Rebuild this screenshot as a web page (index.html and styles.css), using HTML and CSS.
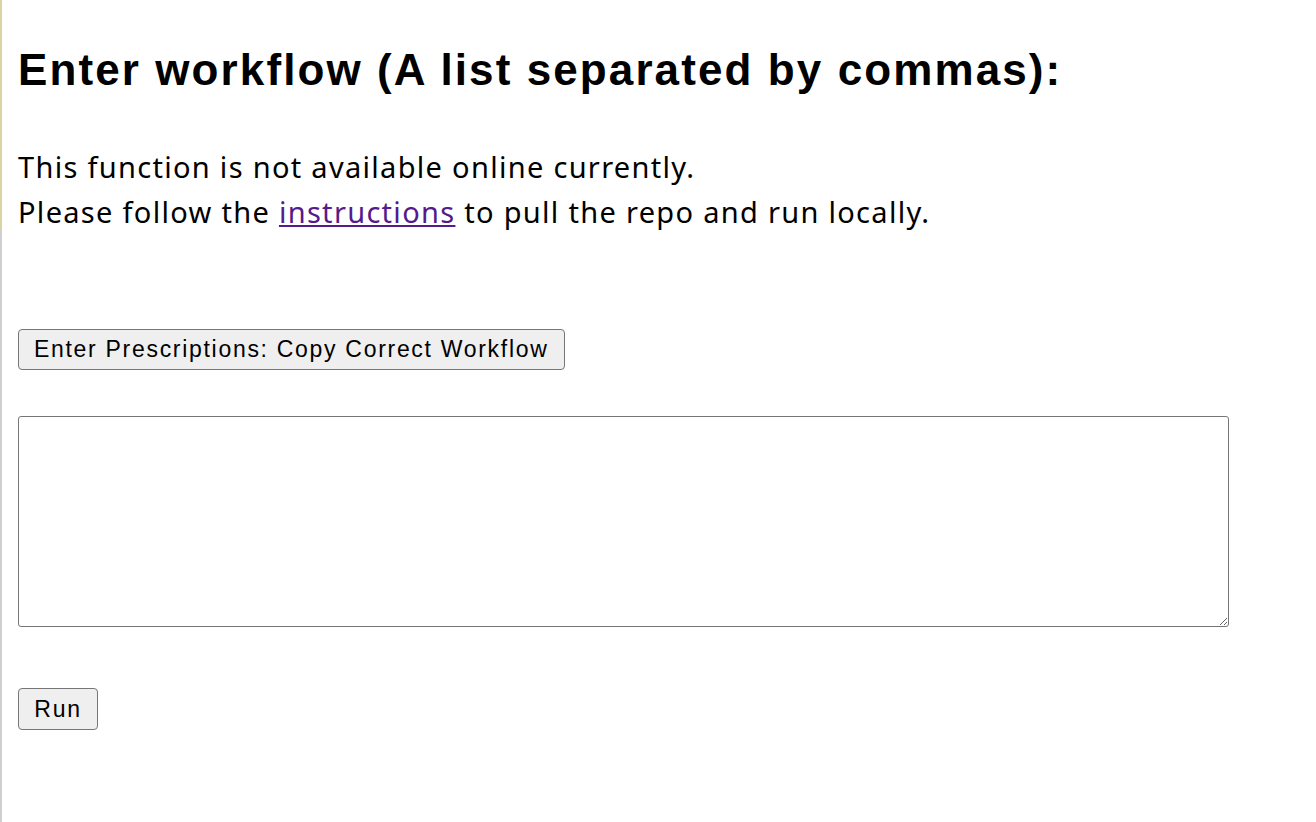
FILE: index.html
```html
<!DOCTYPE html>
<html lang="en">
<head>
<meta charset="utf-8">
<title>Workflow</title>
<link rel="stylesheet" href="styles.css">
</head>
<body>
<div class="edge"></div>
<main class="page">
  <h1 class="title">Enter workflow (A list separated by commas):</h1>
  <p class="note">This function is not available online currently.<br>Please follow the <a class="link" href="#">instructions</a> to pull the repo and run locally.</p>
  <button class="btn btn-copy" type="button">Enter Prescriptions: Copy Correct Workflow</button>
  <textarea class="workflow"></textarea>
  <button class="btn btn-run" type="button">Run</button>
</main>
</body>
</html>
```
FILE: styles.css
```css
html, body {
  margin: 0;
  padding: 0;
  background: #ffffff;
}
body {
  display: flex;
  min-height: 822px;
  font-family: "Liberation Sans", Arial, sans-serif;
  color: #000;
}
.edge {
  width: 2px;
  flex: none;
  background: linear-gradient(#d9d3a6 0, #d9d3a6 230px, #cfcfcf 230px, #cfcfcf 100%);
}
.page {
  display: flex;
  flex-direction: column;
  align-items: flex-start;
  padding: 45px 0 0 16px;
}
.title {
  margin: 0;
  font-size: 44px;
  line-height: 50px;
  font-weight: bold;
  letter-spacing: 2.1px;
}
.note {
  margin: 49px 0 0 0;
  font-family: "Noto Sans", "Liberation Sans", sans-serif;
  font-size: 29px;
  line-height: 45px;
  letter-spacing: 1.3px;
}
.link {
  color: #551a8b;
}
.btn {
  font-family: "Liberation Sans", Arial, sans-serif;
  font-size: 23px;
  letter-spacing: 1.7px;
  color: #000;
  background: #efefef;
  border: 1px solid #767676;
  border-radius: 4px;
  padding: 0 15px;
  box-sizing: border-box;
}
.btn-copy {
  margin-top: 95px;
  height: 41px;
}
.btn-run {
  margin-top: 61px;
  height: 42px;
  width: 80px;
  padding: 0;
}
.workflow {
  margin-top: 46px;
  width: 1211px;
  height: 211px;
  box-sizing: border-box;
  border: 1px solid #767676;
  border-radius: 3px;
  resize: both;
}
```
